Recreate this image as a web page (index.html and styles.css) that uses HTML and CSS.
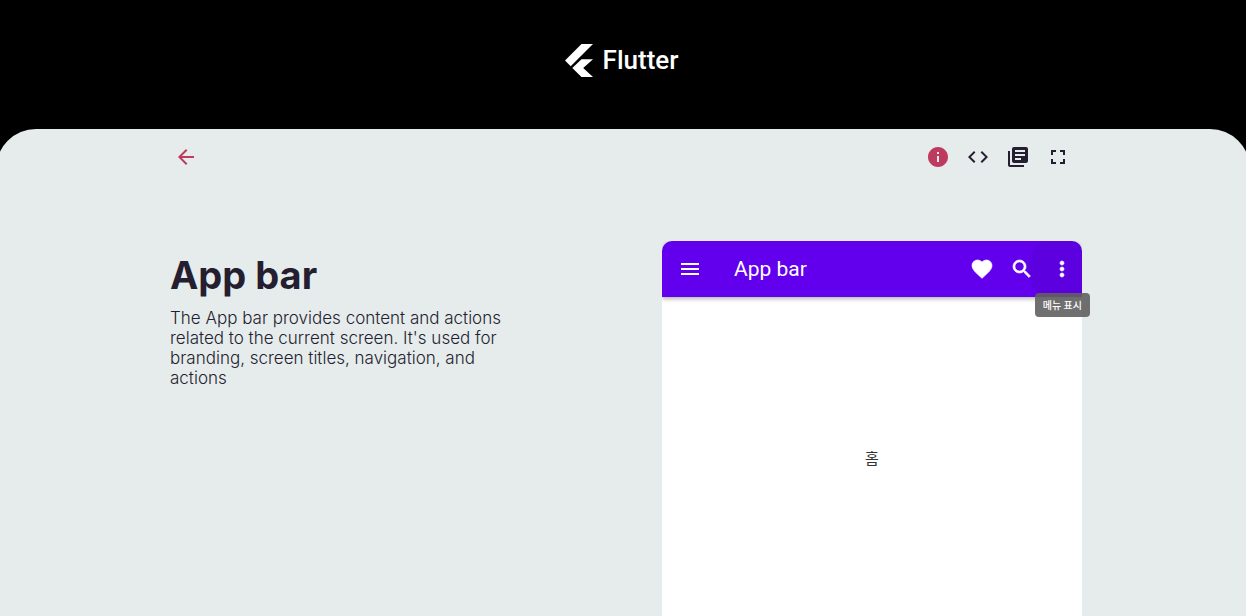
FILE: index.html
```html
<!DOCTYPE html>
<html lang="ko">
<head>
<meta charset="utf-8">
<meta name="viewport" content="width=device-width, initial-scale=1">
<title>Flutter Gallery - App bar</title>
<link rel="stylesheet" href="styles.css">
</head>
<body>
<header class="brand">
  <svg class="brand-mark" viewBox="0 0 28 33" aria-hidden="true"><path d="M16.5 0H28L5.7 22.300 0 16.500zM16.500 15.200H28L18.200 24.100 28 33H16.500L7.300 24.100z"/></svg>
  <span class="brand-name">Flutter</span>
</header>
<main class="panel">
  <div class="content">
    <nav class="toolbar" aria-label="Demo">
      <button class="tool tool-accent" aria-label="Back"><svg viewBox="0 0 24 24"><path d="M20 11H7.830l5.590-5.590L12 4l-8 8 8 8 1.410-1.410L7.830 13H20v-2z"/></svg></button>
      <div class="tool-group">
        <button class="tool tool-accent" aria-label="Info"><svg viewBox="0 0 24 24"><path d="M12 2C6.480 2 2 6.480 2 12s4.480 10 10 10 10-4.480 10-10S17.520 2 12 2zm1 15h-2v-6h2v6zm0-8h-2V7h2v2z"/></svg></button>
        <button class="tool" aria-label="Code"><svg viewBox="0 0 24 24"><path d="M9.400 16.600L4.800 12l4.600-4.600L8 6l-6 6 6 6 1.400-1.400zm5.200 0l4.600-4.600-4.600-4.600L16 6l6 6-6 6-1.400-1.400z"/></svg></button>
        <button class="tool" aria-label="Documentation"><svg viewBox="0 0 24 24"><path d="M4 6H2v14c0 1.100.9 2 2 2h14v-2H4V6zm16-4H8c-1.100 0-2 .9-2 2v12c0 1.100.9 2 2 2h12c1.100 0 2-.9 2-2V4c0-1.100-.9-2-2-2zm-1 9H9V9h10v2zm-4 4H9v-2h6v2zm4-8H9V5h10v2z"/></svg></button>
        <button class="tool" aria-label="Full screen"><svg viewBox="0 0 24 24"><path d="M7 14H5v5h5v-2H7v-3zm-2-4h2V7h3V5H5v5zm12 7h-3v2h5v-5h-2v3zM14 5v2h3v3h2V5h-5z"/></svg></button>
      </div>
    </nav>
    <div class="demo">
      <section class="info">
        <h1 class="title">App bar</h1>
        <p class="description">The App bar provides content and actions related to the current screen. It's used for branding, screen titles, navigation, and actions</p>
      </section>
      <section class="device">
        <header class="appbar">
          <button class="action" aria-label="Navigation menu"><svg viewBox="0 0 24 24"><path d="M3 18h18v-2H3v2zm0-5h18v-2H3v2zm0-7v2h18V6H3z"/></svg></button>
          <h2 class="appbar-title">App bar</h2>
          <button class="action action-bold" aria-label="Favorite"><svg viewBox="0 0 24 24"><path d="M12 21.350l-1.450-1.320C5.400 15.360 2 12.280 2 8.500 2 5.420 4.420 3 7.500 3c1.740 0 3.410.81 4.500 2.090C13.090 3.810 14.760 3 16.500 3 19.580 3 22 5.420 22 8.500c0 3.780-3.400 6.860-8.550 11.540L12 21.350z"/></svg></button>
          <button class="action action-bold" aria-label="Search"><svg viewBox="0 0 24 24"><path d="M15.500 14h-.79l-.28-.27C15.410 12.590 16 11.110 16 9.500 16 5.910 13.090 3 9.500 3S3 5.910 3 9.500 5.910 16 9.500 16c1.610 0 3.090-.59 4.230-1.570l.27.28v.79l5 4.990L20.490 19l-4.990-5zm-6 0C7.010 14 5 11.990 5 9.500S7.010 5 9.500 5 14 7.010 14 9.500 11.990 14 9.500 14z"/></svg></button>
          <button class="action action-bold action-hover" aria-describedby="menu-tip" aria-label="More"><svg viewBox="0 0 24 24"><path d="M12 8c1.100 0 2-.9 2-2s-.9-2-2-2-2 .9-2 2 .9 2 2 2zm0 2c-1.100 0-2 .9-2 2s.9 2 2 2 2-.9 2-2-.9-2-2-2zm0 6c-1.100 0-2 .9-2 2s.9 2 2 2 2-.9 2-2-.9-2-2-2z"/></svg></button>
        </header>
        <div class="screen">홈</div>
        <div class="tooltip" id="menu-tip" role="tooltip">메뉴 표시</div>
      </section>
    </div>
  </div>
</main>
</body>
</html>
```
FILE: styles.css
```css
* { box-sizing: border-box; }

body {
  margin: 0;
  min-height: 100vh;
  display: flex;
  flex-direction: column;
  overflow: hidden;
  background: #000;
  color: #241e30;
  font-family: Roboto, "Noto Sans CJK KR", sans-serif;
}

button {
  border: 0;
  padding: 0;
  background: none;
  color: inherit;
  cursor: pointer;
}

svg { display: block; fill: currentColor; }

.brand {
  display: flex;
  align-items: center;
  justify-content: center;
  gap: 10px;
  padding: 39px 3px 48px 0;
  color: #fff;
}

.brand-mark { width: 28px; height: 33px; }
.brand-name { font-size: 26px; line-height: 42px; font-weight: 500; }

.panel {
  flex: 1;
  display: flex;
  justify-content: center;
  margin: 0 -4px;
  border-radius: 40px 40px 0 0;
  background: #e6ebeb;
}

.content {
  flex: 1;
  max-width: 918px;
  display: flex;
  flex-direction: column;
}

.toolbar {
  display: flex;
  justify-content: space-between;
  padding: 8px 4px 8px 2px;
}

.tool-group { display: flex; }

.tool {
  display: grid;
  place-items: center;
  width: 40px;
  height: 40px;
}

.tool svg, .action svg { width: 24px; height: 24px; }
.tool-accent { color: #bf3a5f; }

.demo {
  flex: 1;
  display: flex;
  justify-content: space-between;
  padding-top: 56px;
}

.info { width: 356px; padding: 11px 0 0 6px; }

.title {
  margin: 0;
  font: 700 38px/46px Inter, sans-serif;
}

.description {
  margin: 10px 0 0;
  font: 300 17px/20px Inter, sans-serif;
}

.device {
  position: relative;
  width: 420px;
  display: flex;
  flex-direction: column;
}

.appbar {
  position: relative;
  overflow: hidden;
  display: flex;
  align-items: center;
  height: 56px;
  padding-left: 8px;
  border-radius: 10px 10px 0 0;
  background: #6200ee;
  box-shadow: 0 2px 4px rgba(0, 0, 0, .3);
  clip-path: inset(0 0 -8px 0);
  color: #fff;
}

.appbar-title {
  flex: 1;
  margin: 0 0 0 24px;
  font-size: 21px;
  line-height: 24px;
  font-weight: 400;
}

.action {
  position: relative;
  display: grid;
  place-items: center;
  width: 40px;
  height: 40px;
}

.action svg { position: relative; }
.action-bold svg { stroke: currentColor; stroke-width: .6; }

.action-hover::before {
  content: "";
  position: absolute;
  inset: -14px;
  border-radius: 50%;
  background: rgba(0, 0, 0, .06);
}

.screen {
  flex: 1;
  display: grid;
  place-items: start center;
  padding-top: 152px;
  background: #fff;
  color: #333;
  font-size: 15px;
  line-height: 20px;
}

.tooltip {
  position: absolute;
  top: 52px;
  right: -8px;
  padding: 2px 8px 0;
  border-radius: 4px;
  background: rgba(97, 97, 97, .9);
  color: #fff;
  font-size: 10px;
  line-height: 22px;
  font-weight: 500;
}
```
